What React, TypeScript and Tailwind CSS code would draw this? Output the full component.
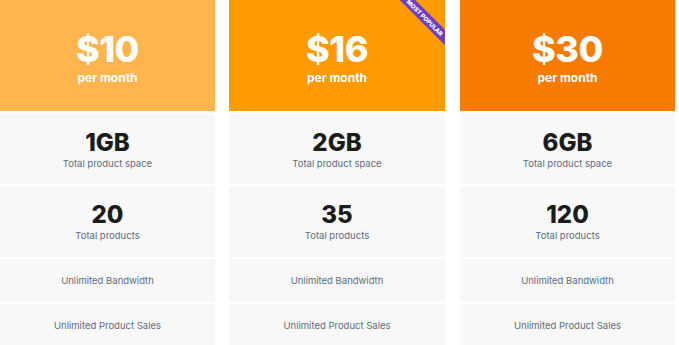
import React from "react";

type Plan = {
  price: string;
  space: string;
  products: string;
  bg: string;
  popular?: boolean;
  box: string;
};

const plans: Plan[] = [
  { price: "$10", space: "1GB", products: "20", bg: "bg-[#ffb54d]", box: "w-[215px]" },
  { price: "$16", space: "2GB", products: "35", bg: "bg-[#ff9a00]", popular: true, box: "w-[216px] ml-[14px]" },
  { price: "$30", space: "6GB", products: "120", bg: "bg-[#f67b00]", box: "w-[215px] ml-[15px]" },
];

function PlanColumn({ plan }: { plan: Plan }) {
  return (
    <div className={`${plan.box} flex flex-col gap-[2px] shrink-0`}>
      <div className={`${plan.bg} relative h-[111px] overflow-hidden flex flex-col items-center justify-center pt-[2px]`}>
        <div className="text-[36px] leading-[40px] font-extrabold text-white tracking-[-0.5px]">{plan.price}</div>
        <div className="text-[12px] leading-[15px] font-bold text-white mt-[1px]">per month</div>
        {plan.popular && (
          <div className="absolute left-[156px] top-[12px] w-[80px] h-[11px] rotate-45 bg-[#6b3fc4] flex items-center justify-center">
            <span className="text-[6px] leading-none font-extrabold text-white uppercase">Most Popular</span>
          </div>
        )}
      </div>
      <div className="bg-[#f8f8f8] h-[71px] flex flex-col items-center justify-center pt-[2px]">
        <div className="text-[24px] leading-[28px] font-extrabold text-[#1c1c1c]">{plan.space}</div>
        <div className="text-[9.5px] leading-[12px] text-[#5f6b80] mt-[1px]">Total product space</div>
      </div>
      <div className="bg-[#f8f8f8] h-[71px] flex flex-col items-center justify-center">
        <div className="text-[24px] leading-[28px] font-extrabold text-[#1c1c1c]">{plan.products}</div>
        <div className="text-[9.5px] leading-[12px] text-[#5f6b80] mt-[1px]">Total products</div>
      </div>
      <div className="bg-[#f8f8f8] h-[43px] flex items-center justify-center">
        <div className="text-[9.5px] leading-[12px] text-[#5f6b80]">Unlimited Bandwidth</div>
      </div>
      <div className="bg-[#f8f8f8] h-[43px] flex items-center justify-center">
        <div className="text-[9.5px] leading-[12px] text-[#5f6b80]">Unlimited Product Sales</div>
      </div>
    </div>
  );
}

export default function App() {
  return (
    <div className="w-[679px] h-[345px] overflow-hidden bg-white font-['Inter',sans-serif]">
      <div className="flex">
        {plans.map((p) => (
          <PlanColumn key={p.price} plan={p} />
        ))}
      </div>
    </div>
  );
}
